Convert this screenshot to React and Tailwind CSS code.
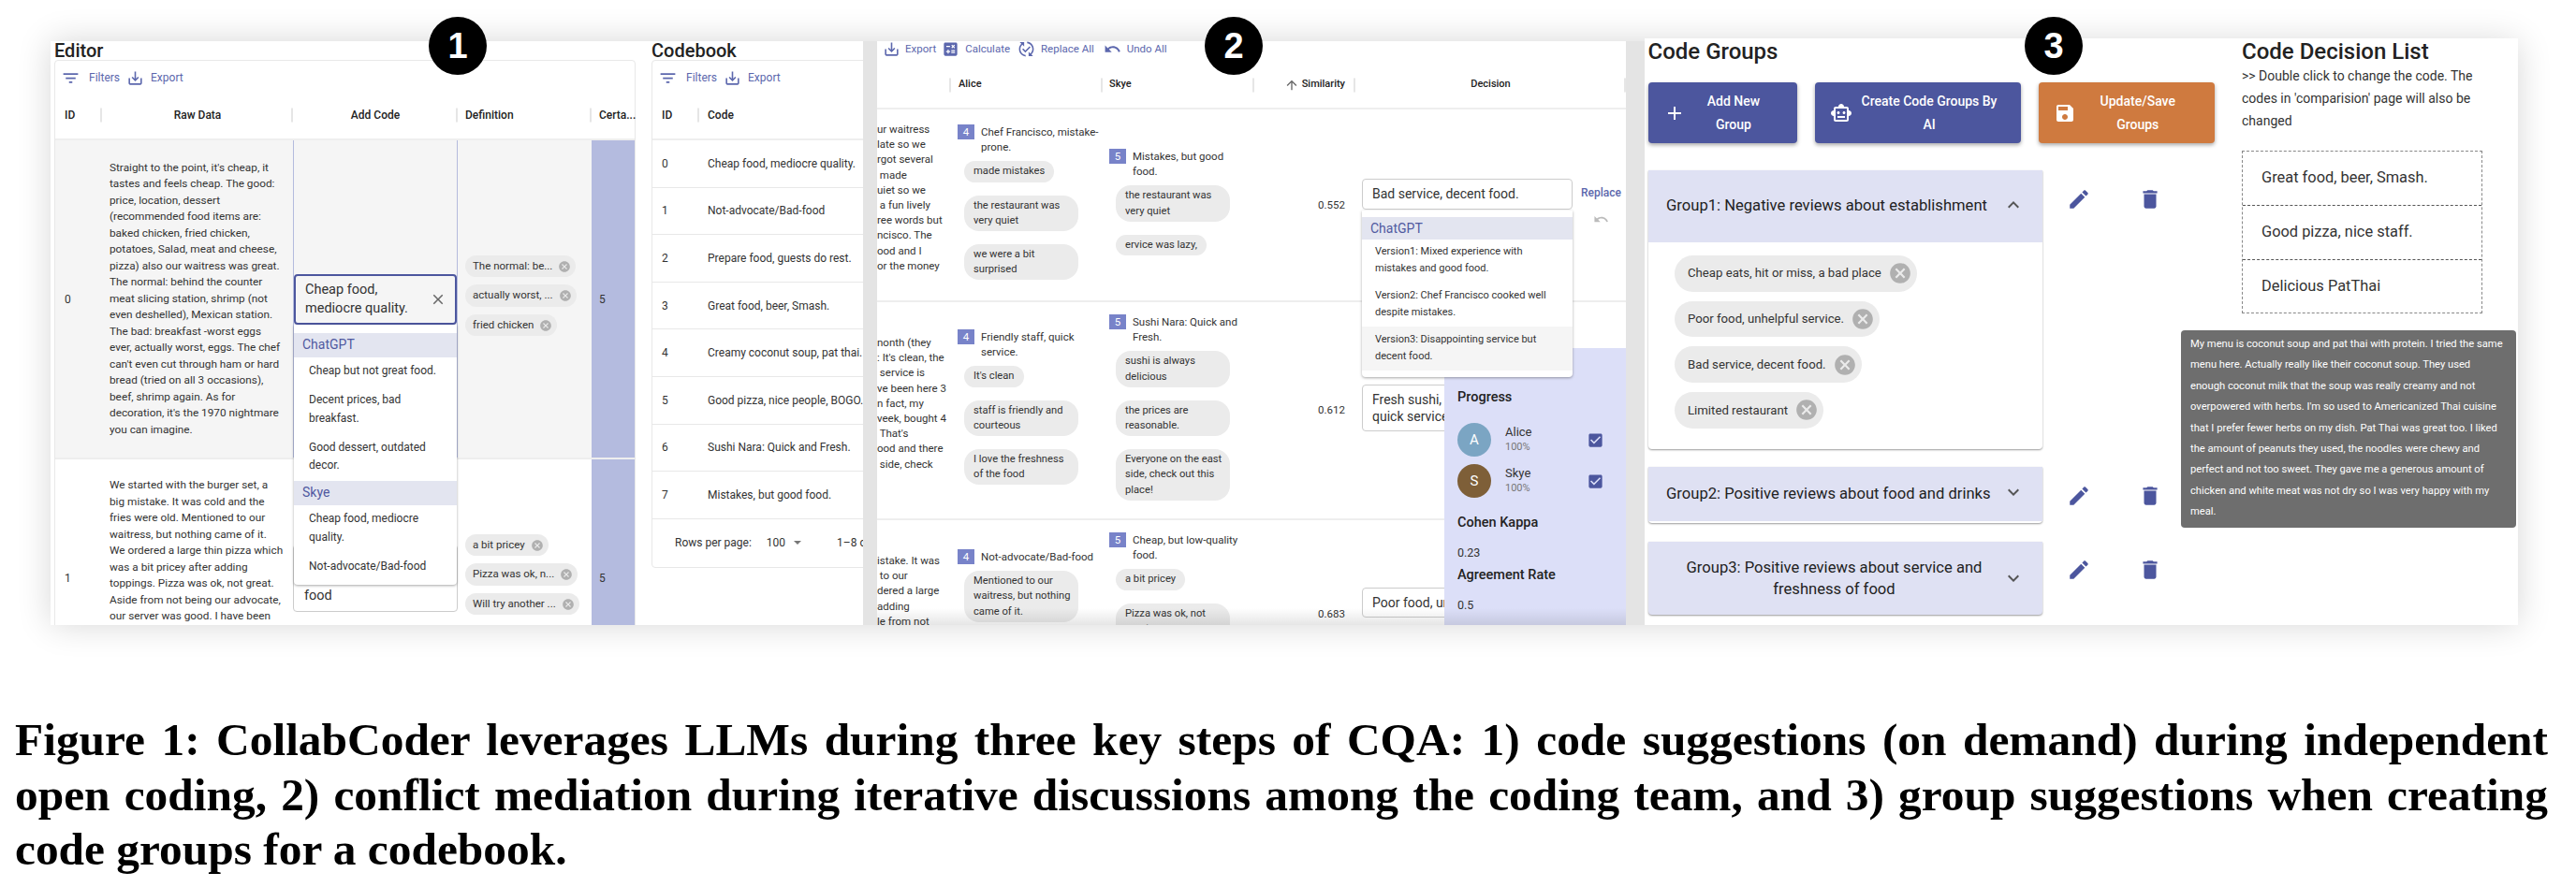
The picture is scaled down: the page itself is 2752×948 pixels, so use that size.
// App.jsx - CollabCoder figure: three screenshots side by side with a caption
const icons = {
  filter: "M10 18h4v-2h-4v2zM3 6v2h18V6H3zm3 7h12v-2H6v2z",
  exportFile: "M19 12v7H5v-7H3v7c0 1.1.9 2 2 2h14c1.1 0 2-.9 2-2v-7h-2zm-6 .67l2.59-2.58L17 11.5l-5 5-5-5 1.41-1.41L11 12.67V3h2z",
  calculate: "M19 3H5c-1.1 0-2 .9-2 2v14c0 1.1.9 2 2 2h14c1.1 0 2-.9 2-2V5c0-1.1-.9-2-2-2zm-5.97 4.06L14.09 6l1.41 1.41L16.91 6l1.06 1.06-1.41 1.41 1.41 1.41-1.06 1.06-1.41-1.4-1.41 1.41-1.06-1.06 1.41-1.41-1.41-1.42zm-6.78.66h5v1.5h-5v-1.5zM11.5 16h-2v2H8v-2H6v-1.5h2v-2h1.5v2h2V16zm6.5 1.25h-5v-1.5h5v1.5zm0-2.5h-5v-1.5h5v1.5z",
  replace: "M17.66 9.53l-7.07 7.07-4.24-4.24 1.41-1.41 2.83 2.83 5.66-5.66 1.41 1.41zM4 12c0-2.33 1.02-4.42 2.62-5.88L9 8.5v-6H3l2.2 2.2C3.24 6.52 2 9.11 2 12c0 5.19 3.95 9.45 9 9.95v-2.02c-3.94-.49-7-3.86-7-7.93zm18 0c0-5.19-3.95-9.45-9-9.95v2.02c3.94.49 7 3.86 7 7.93 0 2.33-1.02 4.42-2.62 5.88L15 15.5v6h6l-2.2-2.2c1.96-1.82 3.2-4.41 3.2-7.3z",
  undo: "M12.5 8c-2.65 0-5.05.99-6.9 2.6L2 7v9h9l-3.62-3.62c1.39-1.16 3.16-1.88 5.12-1.88 3.54 0 6.55 2.31 7.6 5.5l2.37-.78C21.08 11.03 17.15 8 12.5 8z",
  cancel: "M12 2C6.47 2 2 6.47 2 12s4.47 10 10 10 10-4.47 10-10S17.53 2 12 2zm5 13.59L15.59 17 12 13.41 8.41 17 7 15.59 10.59 12 7 8.41 8.41 7 12 10.59 15.59 7 17 8.41 13.41 12 17 15.59z",
  close: "M19 6.41L17.59 5 12 10.59 6.41 5 5 6.41 10.59 12 5 17.59 6.41 19 12 13.41 17.59 19 19 17.59 13.41 12z",
  add: "M19 13h-6v6h-2v-6H5v-2h6V5h2v6h6v2z",
  robot: "M20 9V7c0-1.1-.9-2-2-2h-3c0-1.66-1.34-3-3-3S9 3.34 9 5H6c-1.1 0-2 .9-2 2v2c-1.66 0-3 1.34-3 3s1.34 3 3 3v4c0 1.1.9 2 2 2h12c1.1 0 2-.9 2-2v-4c1.66 0 3-1.34 3-3s-1.34-3-3-3zm-2 10H6V7h12v12zm-9-6c-.83 0-1.5-.67-1.5-1.5S8.17 10 9 10s1.5.67 1.5 1.5S9.83 13 9 13zm7.5-1.5c0 .83-.67 1.5-1.5 1.5s-1.5-.67-1.5-1.5.67-1.5 1.5-1.5 1.5.67 1.5 1.5zM8 15h8v2H8v-2z",
  save: "M17 3H5c-1.11 0-2 .9-2 2v14c0 1.1.89 2 2 2h14c1.1 0 2-.9 2-2V7l-4-4zm-5 16c-1.66 0-3-1.34-3-3s1.34-3 3-3 3 1.34 3 3-1.34 3-3 3zm3-10H5V5h10v4z",
  edit: "M3 17.25V21h3.75L17.81 9.94l-3.75-3.75L3 17.25zM20.71 7.04c.39-.39.39-1.02 0-1.41l-2.34-2.34c-.39-.39-1.02-.39-1.41 0l-1.83 1.83 3.75 3.75 1.83-1.83z",
  trash: "M6 19c0 1.1.9 2 2 2h8c1.1 0 2-.9 2-2V7H6v12zM19 4h-3.5l-1-1h-5l-1 1H5v2h14V4z",
  more: "M16.59 8.59L12 13.17 7.41 8.59 6 10l6 6 6-6z",
  less: "M12 8l-6 6 1.41 1.41L12 10.83l4.59 4.58L18 14z",
  up: "M4 12l1.41 1.41L11 7.83V20h2V7.83l5.58 5.59L20 12l-8-8-8 8z",
  check: "M19 3H5c-1.11 0-2 .9-2 2v14c0 1.1.89 2 2 2h14c1.11 0 2-.9 2-2V5c0-1.1-.89-2-2-2zm-9 14l-5-5 1.41-1.41L10 14.17l7.59-7.59L19 8l-9 9z",
};

const Icon = ({ name, className = "" }) => (
  <svg viewBox="0 0 24 24" className={`shrink-0 fill-current ${className}`}>
    <path d={icons[name]} />
  </svg>
);

const Badge = ({ n, className }) => (
  <div className={`absolute top-[18px] z-40 flex h-[62px] w-[62px] items-center justify-center rounded-full bg-black font-['Liberation_Sans',sans-serif] text-[38px] font-bold leading-none text-white ${className}`}>
    {n}
  </div>
);

const Toolbar = () => (
  <div className="flex h-[36px] items-center pl-[6px] text-[12px] text-[#5c67ad]">
    <Icon name="filter" className="h-[21px] w-[21px]" />
    <span className="ml-[9px]">Filters</span>
    <Icon name="exportFile" className="ml-[7px] h-[19px] w-[19px]" />
    <span className="ml-[7px]">Export</span>
  </div>
);

const Sep = ({ className = "" }) => (
  <span className={`absolute top-1/2 h-[15px] w-[2px] -translate-y-1/2 bg-[#e6e6e6] ${className}`} />
);

const DefChip = ({ text }) => (
  <div className="flex h-[23.5px] w-fit items-center rounded-full bg-[#ebebeb] pl-[8px] pr-[5px] text-[11.5px] text-[#333]">
    <span className="whitespace-nowrap">{text}</span>
    <Icon name="cancel" className="ml-[6px] h-[14px] w-[14px] text-[#b0b0b0]" />
  </div>
);

const ListHead = ({ children }) => (
  <div className="bg-[#e3e5f0] text-[#5059a0]">{children}</div>
);

const SuggestOption = ({ children }) => (
  <div className="py-[5.75px] pl-[16px] pr-[10px]">{children}</div>
);

const rawRow0 = [
  "Straight to the point, it's cheap, it",
  "tastes and feels cheap. The good:",
  "price, location, dessert",
  "(recommended food items are:",
  "baked chicken, fried chicken,",
  "potatoes, Salad, meat and cheese,",
  "pizza) also our waitress was great.",
  "The normal: behind the counter",
  "meat slicing station, shrimp (not",
  "even deshelled), Mexican station.",
  "The bad: breakfast -worst eggs",
  "ever, actually worst, eggs. The chef",
  "can't even cut through ham or hard",
  "bread (tried on all 3 occasions),",
  "beef, shrimp again. As for",
  "decoration, it's the 1970 nightmare",
  "you can imagine.",
];

const rawRow1 = [
  "We started with the burger set, a",
  "big mistake. It was cold and the",
  "fries were old. Mentioned to our",
  "waitress, but nothing came of it.",
  "We ordered a large thin pizza which",
  "was a bit pricey after adding",
  "toppings. Pizza was ok, not great.",
  "Aside from not being our advocate,",
  "our server was good. I have been",
];

const Editor = () => (
  <div className="w-[621px] shrink-0">
    <div className="h-[20px] text-[20px] font-medium leading-[20px] text-[#222]">Editor</div>
    <div className="rounded-t-[4px] border border-[#e8e8e8] text-[12px] text-[#333]">
      <Toolbar />
      <div className="grid h-[49px] grid-cols-[50px_204px_176px_143px_46px] border-b-2 border-[#eee] pb-[3px] font-medium text-[#222]">
        <div className="relative flex items-center pl-[10px]">ID<Sep className="right-0" /></div>
        <div className="relative flex items-center justify-center">Raw Data<Sep className="right-0" /></div>
        <div className="relative flex items-center justify-center">Add Code<Sep className="right-0" /></div>
        <div className="relative flex items-center pl-[8px]">Definition<Sep className="right-0" /></div>
        <div className="flex items-center pl-[8px]">Certa...</div>
      </div>

      <div className="grid h-[341px] grid-cols-[50px_204px_176px_143px_46px] border-b-2 border-[#eee] bg-[#f5f5f5]">
        <div className="flex items-center pl-[10px]">0</div>
        <div className="flex items-center whitespace-nowrap pl-[8px] text-[11.8px] leading-[17.5px]">
          <div>{rawRow0.map((l) => <div key={l}>{l}</div>)}</div>
        </div>
        <div className="flex items-center border-x border-[#b4bbdd]">
          <div className="relative w-full">
            <div className="flex h-[54px] items-center justify-between rounded-[4px] border-2 border-[#4c569e] pl-[10px] pr-[9px] text-[14.5px] leading-[20px]">
              <span>Cheap food,<br />mediocre quality.</span>
              <Icon name="close" className="h-[18px] w-[18px] text-[#666]" />
            </div>
            <div className="absolute inset-x-0 top-full z-20 rounded-b-[4px] bg-white pt-[9px] pb-[3.5px] leading-[19.5px] shadow-[0_1px_3px_rgba(0,0,0,0.35)]">
              <ListHead><div className="flex h-[26px] items-center pl-[9px] text-[14px]">ChatGPT</div></ListHead>
              <SuggestOption>Cheap but not great food.</SuggestOption>
              <SuggestOption>Decent prices, bad<br />breakfast.</SuggestOption>
              <SuggestOption>Good dessert, outdated<br />decor.</SuggestOption>
              <ListHead><div className="flex h-[26px] items-center pl-[9px] text-[14px]">Skye</div></ListHead>
              <SuggestOption>Cheap food, mediocre<br />quality.</SuggestOption>
              <SuggestOption>Not-advocate/Bad-food</SuggestOption>
            </div>
          </div>
        </div>
        <div className="flex flex-col justify-center gap-[8px] pb-[7px] pl-[8px]">
          <DefChip text="The normal: be..." />
          <DefChip text="actually worst, ..." />
          <DefChip text="fried chicken" />
        </div>
        <div className="flex items-center bg-[#b4bbdf] pl-[8px]">5</div>
      </div>

      <div className="grid h-[254px] grid-cols-[50px_204px_176px_143px_46px]">
        <div className="flex items-center pl-[10px]">1</div>
        <div className="whitespace-nowrap pl-[8px] pt-[19px] text-[11.8px] leading-[17.5px]">
          {rawRow1.map((l) => <div key={l}>{l}</div>)}
        </div>
        <div className="flex items-center">
          <div className="flex h-[72px] w-full items-end rounded-[4px] border border-[#ccc] pb-[6px] pl-[11px] text-[14.5px] leading-[20px]">food</div>
        </div>
        <div className="flex flex-col justify-center gap-[8px] pb-[8px] pl-[8px]">
          <DefChip text="a bit pricey" />
          <DefChip text="Pizza was ok, n..." />
          <DefChip text="Will try another ..." />
        </div>
        <div className="flex items-center bg-[#b4bbdf] pl-[8px]">5</div>
      </div>
    </div>
  </div>
);

const codebookRows = [
  "Cheap food, mediocre quality.",
  "Not-advocate/Bad-food",
  "Prepare food, guests do rest.",
  "Great food, beer, Smash.",
  "Creamy coconut soup, pat thai.",
  "Good pizza, nice people, BOGO.",
  "Sushi Nara: Quick and Fresh.",
  "Mistakes, but good food.",
];

const Codebook = () => (
  <div className="ml-[17px] w-[240px] shrink-0">
    <div className="h-[20px] text-[20px] font-medium leading-[20px] text-[#222]">Codebook</div>
    <div className="rounded-[4px] border border-[#e8e8e8] text-[12px] text-[#333]">
      <Toolbar />
      <div className="grid h-[49px] grid-cols-[50px_1fr] border-b-2 border-[#eee] pb-[3px] font-medium text-[#222]">
        <div className="relative flex items-center pl-[10px]">ID<Sep className="right-0" /></div>
        <div className="flex items-center pl-[9px]">Code</div>
      </div>
      {codebookRows.map((code, i) => (
        <div key={code} className="grid h-[50.6px] grid-cols-[50px_1fr] items-center border-b border-[#e8e8e8]">
          <div className="pl-[10px]">{i}</div>
          <div className="whitespace-nowrap pl-[9px]">{code}</div>
        </div>
      ))}
      <div className="flex h-[51px] items-center whitespace-nowrap pl-[24px] text-[12px]">
        <span>Rows per page:</span>
        <span className="ml-[16px]">100</span>
        <span className="ml-[9px] h-0 w-0 border-x-[4px] border-t-[4px] border-x-transparent border-t-[#777]" />
        <span className="ml-[38px]">1–8 of 8</span>
      </div>
    </div>
  </div>
);

// titles and chips carry their own line breaks, as the rows were wrapped in the source app
const CodeBlock = ({ score, title, chips, className }) => (
  <div className={`w-[162px] pl-[7px] ${className}`}>
    <div className="flex gap-[7px]">
      <span className="flex h-[16px] w-[18px] shrink-0 items-center justify-center bg-[#7883c9] text-white">{score}</span>
      <span className="whitespace-pre-line">{title}</span>
    </div>
    <div className="mt-[7px] flex flex-col items-start gap-[14px] pl-[7px] text-[11.2px]">
      {chips.map((c) => (
        <div key={c} className={`whitespace-pre rounded-[16px] bg-[#ebebeb] py-[3px] pl-[10px] ${c.includes("\n") ? "w-[122px]" : "w-fit pr-[10px]"}`}>{c}</div>
      ))}
    </div>
  </div>
);

const RawLines = ({ lines, className }) => (
  <div className={`w-[79px] overflow-hidden whitespace-pre ${className}`}>
    {lines.map((l, i) => <div key={i}>{l}</div>)}
  </div>
);

const Version = ({ className = "", children }) => (
  <div className={`px-[14px] pb-[5.5px] ${className}`}>{children}</div>
);

const cols2 = "grid grid-cols-[79px_162px_162px_108px_289px]";

const Comparison = () => (
  <div className="relative h-[624px] w-[800px] shrink-0 overflow-hidden bg-white text-[11.5px] leading-[16.2px] text-[#333]">
    <div className="flex h-[16px] items-center pl-[6px] text-[#5c67ad]">
      <Icon name="exportFile" className="h-[19px] w-[19px]" />
      <span className="ml-[5px]">Export</span>
      <Icon name="calculate" className="ml-[6px] h-[19px] w-[19px]" />
      <span className="ml-[6px]">Calculate</span>
      <Icon name="replace" className="ml-[8px] h-[19px] w-[19px]" />
      <span className="ml-[6px]">Replace All</span>
      <Icon name="undo" className="ml-[10px] h-[19px] w-[19px]" />
      <span className="ml-[6px]">Undo All</span>
    </div>
    <div className={`${cols2} h-[57px] border-b-2 border-[#eee] pt-[6px] text-[11px] font-medium text-[#222]`}>
      <div className="relative"><Sep className="right-0" /></div>
      <div className="relative flex items-center pl-[8px]">Alice<Sep className="right-0" /></div>
      <div className="relative flex items-center pl-[7px]">Skye<Sep className="right-0" /></div>
      <div className="relative flex items-center justify-end pr-[11px]">
        <Icon name="up" className="mr-[3px] h-[16px] w-[16px] text-[#666]" />
        Similarity
        <Sep className="right-0" />
      </div>
      <div className="relative flex items-center justify-center">Decision<Sep className="right-0" /></div>
    </div>

    <div className={`${cols2} h-[206px] border-b-2 border-[#eee]`}>
      <RawLines className="pt-[13px]" lines={["ur waitress", "late so we", "rgot several", " made", "uiet so we", " a fun lively", "ree words but", "ncisco. The", "ood and I", "or the money"]} />
      <CodeBlock className="pt-[16px]" score="4" title={"Chef Francisco, mistake-\nprone."} chips={["made mistakes", "the restaurant was\nvery quiet", "we were a bit\nsurprised"]} />
      <CodeBlock className="pt-[42px]" score="5" title={"Mistakes, but good\nfood."} chips={["the restaurant was\nvery quiet", "ervice was lazy,"]} />
      <div className="flex items-center justify-end pr-[11px]">0.552</div>
      <div className="relative pl-[7px] pt-[74px]">
        <div className="flex items-start">
          <div className="relative w-[225px]">
            <div className="flex h-[33px] items-center rounded-[4px] border border-[#ccc] pl-[10px] text-[14px]">Bad service, decent food.</div>
            <div className="absolute inset-x-0 top-[34px] z-20 rounded-b-[4px] bg-white pb-[7.5px] pt-[7px] text-[11px] leading-[18px] shadow-[0_1px_3px_rgba(0,0,0,0.35)]">
              <ListHead><div className="flex h-[24px] items-center pl-[9px] text-[14px]">ChatGPT</div></ListHead>
              <Version className="pt-[4px]">Version1: Mixed experience with<br />mistakes and good food.</Version>
              <Version className="pt-[5.5px]">Version2: Chef Francisco cooked well<br />despite mistakes.</Version>
              <Version className="bg-[#f5f5f5] pt-[5.5px]">Version3: Disappointing service but<br />decent food.</Version>
            </div>
          </div>
          <div className="ml-[9px] flex flex-col items-center text-[12px] font-medium text-[#5c67ad]">
            <span className="mt-[7px]">Replace</span>
            <Icon name="undo" className="mt-[12px] h-[17px] w-[17px] text-[#bbb]" />
          </div>
        </div>
      </div>
    </div>

    <div className={`${cols2} h-[233px] border-b-2 border-[#eee]`}>
      <RawLines className="pt-[35px]" lines={["nonth (they", ": It's clean, the", " service is", "ve been here 3", "n fact, my", "veek, bought 4", " That's", "ood and there", " side, check"]} />
      <CodeBlock className="pt-[29px]" score="4" title={"Friendly staff, quick\nservice."} chips={["It's clean", "staff is friendly and\ncourteous", "I love the freshness\nof the food"]} />
      <CodeBlock className="pt-[13px]" score="5" title={"Sushi Nara: Quick and\nFresh."} chips={["sushi is always\ndelicious", "the prices are\nreasonable.", "Everyone on the east\nside, check out this\nplace!"]} />
      <div className="flex items-center justify-end pr-[11px]">0.612</div>
      <div className="pl-[7px] pt-[88px]">
        <div className="flex h-[50px] w-[225px] items-center rounded-[4px] border border-[#ccc] pl-[10px] text-[14px] leading-[18px]"><span>Fresh sushi, friendly staff,<br />quick service</span></div>
      </div>
    </div>

    <div className={`${cols2} h-[200px]`}>
      <RawLines className="pt-[35px]" lines={["istake. It was", " to our", "dered a large", "adding", "le from not"]} />
      <CodeBlock className="pt-[31px]" score="4" title="Not-advocate/Bad-food" chips={["Mentioned to our\nwaitress, but nothing\ncame of it."]} />
      <CodeBlock className="pt-[13px]" score="5" title={"Cheap, but low-quality\nfood."} chips={["a bit pricey", "Pizza was ok, not\ngreat."]} />
      <div className="flex items-center justify-end pr-[11px]">0.683</div>
      <div className="pl-[7px] pt-[72px]">
        <div className="flex h-[32px] w-[225px] items-center whitespace-nowrap rounded-[4px] border border-[#ccc] pl-[10px] text-[14px]">Poor food, unhelpful service.</div>
      </div>
    </div>

    {/* Progress drawer lies over the decision column */}
    <div className="absolute bottom-0 right-0 top-[328px] z-10 w-[194px] bg-[#dcdff8] pl-[14px] text-[12.5px] leading-[20px]">
      <div className="mt-[43px] text-[14.5px] font-medium text-[#222]">Progress</div>
      <div className="mt-[17px] flex h-[36px] items-center pr-[23px]">
        <span className="flex h-[36px] w-[36px] items-center justify-center rounded-full bg-[#7ba5c3] text-[15px] text-white">A</span>
        <div className="ml-[15px] text-[13px] leading-[16px]">Alice<div className="text-[11px] text-[#777]">100%</div></div>
        <Icon name="check" className="ml-auto h-[19px] w-[19px] text-[#4c569e]" />
      </div>
      <div className="mt-[8px] flex h-[36px] items-center pr-[23px]">
        <span className="flex h-[36px] w-[36px] items-center justify-center rounded-full bg-[#7e5f38] text-[15px] text-white">S</span>
        <div className="ml-[15px] text-[13px] leading-[16px]">Skye<div className="text-[11px] text-[#777]">100%</div></div>
        <Icon name="check" className="ml-auto h-[19px] w-[19px] text-[#4c569e]" />
      </div>
      <div className="mt-[17px] text-[14.5px] font-medium text-[#222]">Cohen Kappa</div>
      <div className="mt-[12px]">0.23</div>
      <div className="mt-[4px] text-[14.5px] font-medium text-[#222]">Agreement Rate</div>
      <div className="mt-[12px]">0.5</div>
    </div>
    <div className="absolute inset-x-0 bottom-0 z-30 h-[18px] bg-gradient-to-b from-transparent to-black/10" />
  </div>
);

const GroupChip = ({ text }) => (
  <div className="flex h-[38.7px] w-fit items-center rounded-full bg-[#ebebeb] pl-[14px] pr-[5px] text-[13.2px] text-[#333]">
    <span className="whitespace-nowrap">{text}</span>
    <Icon name="cancel" className="ml-[7px] h-[26px] w-[26px] text-[#b0b0b0]" />
  </div>
);

const RowActions = ({ className = "" }) => (
  <div className={`ml-[26px] flex items-start text-[#4c569e] ${className}`}>
    <Icon name="edit" className="h-[26px] w-[26px]" />
    <Icon name="trash" className="ml-[50px] h-[26px] w-[26px]" />
  </div>
);

const ActionButton = ({ icon, width, className, children }) => (
  <div className={`flex h-[65px] items-center rounded-[4px] pl-[16px] pr-[16px] text-[14px] font-medium leading-[24.5px] text-white shadow-[0_2px_4px_rgba(0,0,0,0.35)] ${width} ${className}`}>
    <Icon name={icon} className="h-[24px] w-[24px]" />
    <span className="flex-1 text-center">{children}</span>
  </div>
);

const CodeGroups = () => (
  <div className="-mt-[3px] flex h-[627px] w-[933px] shrink-0 overflow-hidden bg-white pl-[3.5px] text-[#222]">
    <div className="w-[634.5px] shrink-0">
      <div className="h-[47px] text-[24px] font-medium leading-[28px]">Code Groups</div>
      <div className="flex">
        <ActionButton icon="add" width="w-[159px]" className="bg-[#4c569e]">Add New<br />Group</ActionButton>
        <ActionButton icon="robot" width="ml-[19.5px] w-[220px]" className="bg-[#4c569e]">Create Code Groups By<br />AI</ActionButton>
        <ActionButton icon="save" width="ml-[18.5px] w-[188.5px]" className="bg-[#cf7a3f]">Update/Save<br />Groups</ActionButton>
      </div>

      <div className="mt-[29px] flex">
        <div className="h-[298px] w-[421.5px] rounded-b-[4px] bg-white shadow-[0_1px_2px_rgba(0,0,0,0.4)]">
          <div className="flex h-[77px] items-center justify-between bg-[#dfe1f3] pl-[19.5px] pr-[19px] text-[16.6px]">
            <span>Group1: Negative reviews about establishment</span>
            <Icon name="less" className="-mt-[4px] h-[24px] w-[24px] text-[#555]" />
          </div>
          <div className="flex flex-col gap-[10px] pl-[28.5px] pt-[14px]">
            <GroupChip text="Cheap eats, hit or miss, a bad place" />
            <GroupChip text="Poor food, unhelpful service." />
            <GroupChip text="Bad service, decent food." />
            <GroupChip text="Limited restaurant" />
          </div>
        </div>
        <RowActions className="pt-[18px]" />
      </div>

      <div className="mt-[19px] flex">
        <div className="h-[60px] w-[421.5px] rounded-b-[4px] bg-white shadow-[0_1px_2px_rgba(0,0,0,0.4)]">
          <div className="flex h-[58px] items-center justify-between bg-[#dfe1f3] pl-[19.5px] pr-[19px] text-[16.6px]">
            <span>Group2: Positive reviews about food and drinks</span>
            <Icon name="more" className="-mt-[4px] h-[24px] w-[24px] text-[#555]" />
          </div>
        </div>
        <RowActions className="pt-[18px]" />
      </div>

      <div className="mt-[20px] flex">
        <div className="flex h-[78px] w-[421.5px] items-center rounded-b-[4px] bg-[#dfe1f3] pl-[19.5px] pr-[19px] text-[16.6px] leading-[23px] shadow-[0_1px_2px_rgba(0,0,0,0.4)]">
          <span className="flex-1 text-center">Group3: Positive reviews about service and<br />freshness of food</span>
          <Icon name="more" className="h-[24px] w-[24px] text-[#555]" />
        </div>
        <RowActions className="pt-[17px]" />
      </div>
    </div>

    <div className="w-[257px] shrink-0">
      <div className="h-[28px] whitespace-nowrap text-[24px] font-medium leading-[28px]">Code Decision List</div>
      <p className="text-[14px] leading-[24px] text-[#333]">{">> Double click to change the code. The codes in 'comparision' page will also be changed"}</p>
      <div className="mt-[20px] border border-dashed border-[#888] text-[16.4px] text-[#333]">
        <div className="flex h-[58px] items-center border-b border-dashed border-[#555] pl-[20px]">Great food, beer, Smash.</div>
        <div className="flex h-[58px] items-center border-b border-dashed border-[#555] pl-[20px]">Good pizza, nice staff.</div>
        <div className="flex h-[56px] items-center pl-[20px]">Delicious PatThai</div>
      </div>
    </div>
  </div>
);

const App = () => (
  <div className="relative h-[948px] w-[2752px] overflow-hidden bg-white font-['Roboto',sans-serif]">
    <div className="ml-[54px] mt-[44px] flex h-[624px] w-[2636px] bg-[#e4e4e4] shadow-[0_0_34px_rgba(0,0,0,0.16)]">
      <div className="flex h-[624px] w-[868px] shrink-0 overflow-hidden bg-white pl-[4px]">
        <Editor />
        <Codebook />
      </div>
      <div className="w-[15px] shrink-0" />
      <Comparison />
      <div className="w-[20px] shrink-0" />
      <CodeGroups />
    </div>

    <div className="mt-[94px] pl-[16px] pr-[30px] font-['Liberation_Serif',serif] text-[49.4px] font-bold leading-[58.5px] text-black">
      <div className="[text-align-last:justify]">Figure 1: CollabCoder leverages LLMs during three key steps of CQA: 1) code suggestions (on demand) during independent</div>
      <div className="[text-align-last:justify]">open coding, 2) conflict mediation during iterative discussions among the coding team, and 3) group suggestions when creating</div>
      <div>code groups for a codebook.</div>
    </div>

    <Badge n="1" className="left-[458px]" />
    <Badge n="2" className="left-[1287px]" />
    <Badge n="3" className="left-[2163px]" />

    {/* Review text tooltip hovering over the code decision list */}
    <div className="absolute left-[2330px] top-[353px] z-40 h-[211px] w-[358px] whitespace-nowrap rounded-[4px] bg-[#6e6e6e] pl-[10px] pt-[4px] text-[11.2px] leading-[22.4px] text-white">
      My menu is coconut soup and pat thai with protein. I tried the same<br />
      menu here. Actually really like their coconut soup. They used<br />
      enough coconut milk that the soup was really creamy and not<br />
      overpowered with herbs. I'm so used to Americanized Thai cuisine<br />
      that I prefer fewer herbs on my dish. Pat Thai was great too. I liked<br />
      the amount of peanuts they used, the noodles were chewy and<br />
      perfect and not too sweet. They gave me a generous amount of<br />
      chicken and white meat was not dry so I was very happy with my<br />
      meal.
    </div>
  </div>
);

export default App;
